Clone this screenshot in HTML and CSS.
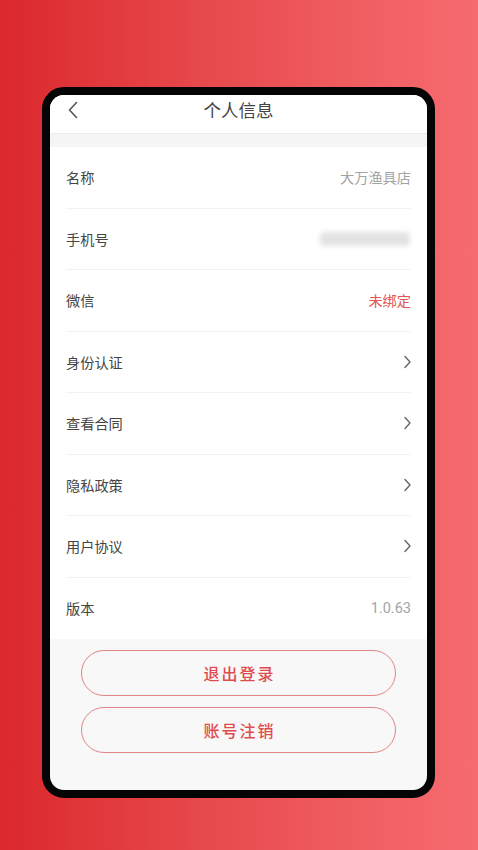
FILE: index.html
```html
<!DOCTYPE html>
<html lang="zh-CN">
<head>
<meta charset="utf-8">
<title>个人信息</title>
<link rel="stylesheet" href="styles.css">
</head>
<body>
<div class="stage">
  <div class="phone">
    <div class="screen">
      <header class="topbar">
        <svg class="back" width="12" height="18" viewBox="0 0 12 18"><path d="M9.5 1.5 L2.5 9 L9.5 16.5" fill="none" stroke="#555" stroke-width="1.6" stroke-linecap="round" stroke-linejoin="round"/></svg>
        <h1 class="title">个人信息</h1>
      </header>
      <div class="spacer"></div>
      <ul class="list">
        <li class="row"><span class="label">名称</span><span class="value">大万渔具店</span></li>
        <li class="row"><span class="label">手机号</span><span class="blur"></span></li>
        <li class="row"><span class="label">微信</span><span class="value red">未绑定</span></li>
        <li class="row"><span class="label">身份认证</span><svg class="chev" width="9" height="14" viewBox="0 0 9 14"><path d="M2 1.5 L7 7 L2 12.5" fill="none" stroke="#666" stroke-width="1.4" stroke-linecap="round" stroke-linejoin="round"/></svg></li>
        <li class="row"><span class="label">查看合同</span><svg class="chev" width="9" height="14" viewBox="0 0 9 14"><path d="M2 1.5 L7 7 L2 12.5" fill="none" stroke="#666" stroke-width="1.4" stroke-linecap="round" stroke-linejoin="round"/></svg></li>
        <li class="row"><span class="label">隐私政策</span><svg class="chev" width="9" height="14" viewBox="0 0 9 14"><path d="M2 1.5 L7 7 L2 12.5" fill="none" stroke="#666" stroke-width="1.4" stroke-linecap="round" stroke-linejoin="round"/></svg></li>
        <li class="row"><span class="label">用户协议</span><svg class="chev" width="9" height="14" viewBox="0 0 9 14"><path d="M2 1.5 L7 7 L2 12.5" fill="none" stroke="#666" stroke-width="1.4" stroke-linecap="round" stroke-linejoin="round"/></svg></li>
        <li class="row last"><span class="label">版本</span><span class="value num">1.0.63</span></li>
      </ul>
      <div class="actions">
        <button class="btn">退出登录</button>
        <button class="btn">账号注销</button>
      </div>
    </div>
  </div>
</div>
</body>
</html>
```
FILE: styles.css
```css
* { box-sizing: border-box; }
html, body { margin: 0; padding: 0; }
body {
  width: 478px;
  height: 850px;
  overflow: hidden;
  background: linear-gradient(90deg, #db282d 0%, #e6474a 40%, #f05e62 75%, #f66b70 100%);
  font-family: "Noto Sans CJK SC", "Noto Sans", sans-serif;
}
.stage {
  padding: 87px 0 0 42px;
}
.phone {
  width: 393px;
  height: 711px;
  border: 8px solid #050505;
  border-radius: 22px;
  background: #050505;
}
.screen {
  width: 100%;
  height: 100%;
  border-radius: 14px;
  overflow: hidden;
  background: #f8f8f8;
  display: flex;
  flex-direction: column;
}
.topbar {
  position: relative;
  height: 39px;
  background: #fff;
  border-bottom: 1px solid #ececec;
  display: flex;
  align-items: center;
  justify-content: center;
}
.back {
  position: absolute;
  left: 17px;
  top: 6px;
}
.title {
  margin: 0;
  font-size: 17.5px;
  font-weight: 400;
  color: #444;
  line-height: 1;
  margin-top: -8px;
}
.spacer {
  height: 13px;
  background: #f5f5f5;
}
.list {
  list-style: none;
  margin: 0;
  padding: 0 16px;
  background: #fff;
}
.row {
  height: 61.5px;
  display: flex;
  align-items: center;
  justify-content: space-between;
  border-bottom: 1px solid #f2f2f2;
}
.row.last { border-bottom: none; }
.label {
  font-size: 14.2px;
  color: #444;
}
.value {
  font-size: 14.2px;
  color: #a3a3a3;
}
.value.num {
  font-family: "Roboto", "Noto Sans", sans-serif;
  font-size: 14.5px;
}
.value.red { color: #e65454; }
.blur {
  width: 90px;
  height: 14px;
  margin-right: 1px;
  background: #dcdcdc;
  border-radius: 4px;
  filter: blur(2.5px);
  opacity: 0.8;
}
.chev { margin-right: -1px; }
.actions {
  padding: 11px 31px 0;
  display: flex;
  flex-direction: column;
  gap: 11px;
}
.btn {
  height: 46px;
  width: 100%;
  border: 1px solid #e18585;
  border-radius: 23px;
  background: transparent;
  color: #e04c4e;
  font-family: "Noto Sans CJK SC", "Noto Sans", sans-serif;
  font-size: 16px;
  font-weight: 500;
  letter-spacing: 2px;
  padding: 0 0 0 2px;
}
```
